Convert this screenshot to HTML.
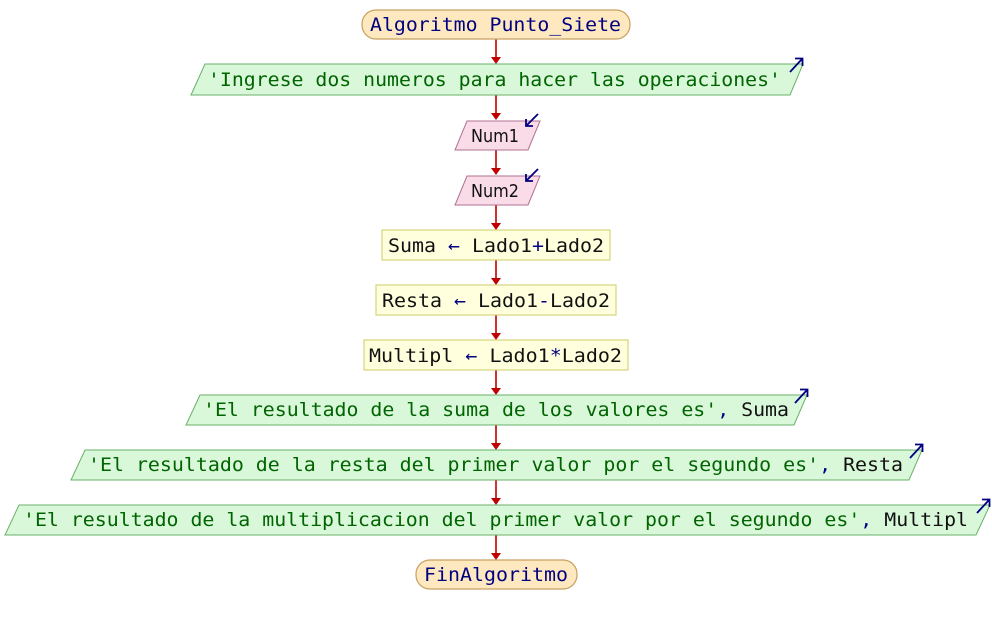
<!DOCTYPE html>
<html><head><meta charset="utf-8"><style>
html,body{margin:0;padding:0;background:#fff;width:992px;height:625px;overflow:hidden}
svg{display:block}
.m{font-family:"DejaVu Sans Mono","Liberation Mono",monospace;font-size:19px}
.s{font-family:"DejaVu Sans","Liberation Sans",sans-serif;font-size:18px}
.g{fill:#006400}.k{fill:#000080}.b{fill:#111}
.out{fill:#d9f7d9;stroke:#6ab06a;stroke-width:1}
.inp{fill:#fadbe8;stroke:#b07090;stroke-width:1}
.asg{fill:#ffffdd;stroke:#cccc66;stroke-width:1}
.term{fill:#fde8c0;stroke:#c8a060;stroke-width:1.2}
.ar{stroke:#c00000;stroke-width:1.6}
.ic{stroke:#000080;stroke-width:1.8;fill:none}
</style></head><body>
<svg width="992" height="625" viewBox="0 0 992 625">
<g class="ar">
<line x1="496" y1="39" x2="496" y2="60"/><line x1="496" y1="95" x2="496" y2="116"/>
<line x1="496" y1="150" x2="496" y2="171"/><line x1="496" y1="205" x2="496" y2="226"/>
<line x1="496" y1="260" x2="496" y2="281"/><line x1="496" y1="315" x2="496" y2="336"/>
<line x1="496" y1="370" x2="496" y2="391"/><line x1="496" y1="425" x2="496" y2="446"/>
<line x1="496" y1="480" x2="496" y2="501"/><line x1="496" y1="535" x2="496" y2="556"/>
</g>
<g fill="#c00000">
<path d="M491 57h10l-5 7z"/><path d="M491 113h10l-5 7z"/><path d="M491 168h10l-5 7z"/>
<path d="M491 223h10l-5 7z"/><path d="M491 278h10l-5 7z"/><path d="M491 333h10l-5 7z"/>
<path d="M491 388h10l-5 7z"/><path d="M491 443h10l-5 7z"/><path d="M491 498h10l-5 7z"/>
<path d="M491 553h10l-5 7z"/>
</g>
<rect class="term" x="362" y="10" width="268" height="29" rx="14"/>
<text class="m k" x="370" y="31" textLength="251" lengthAdjust="spacingAndGlyphs">Algoritmo Punto_Siete</text>
<path class="out" d="M205 64H803L790 95H191Z"/>
<text class="m g" x="208" y="86" textLength="573" lengthAdjust="spacingAndGlyphs">'Ingrese dos numeros para hacer las operaciones'</text>
<path class="ic" d="M790 72L802 59M795 58.5H802.5V66"/>
<path class="inp" d="M467 121H540L528 150H455Z"/>
<text class="s b" x="471" y="142" textLength="48" lengthAdjust="spacingAndGlyphs">Num1</text>
<path class="ic" d="M538 114L526 126M526 119V126H533"/>
<path class="inp" d="M467 176H540L528 205H455Z"/>
<text class="s b" x="471" y="197" textLength="48" lengthAdjust="spacingAndGlyphs">Num2</text>
<path class="ic" d="M538 169L526 181M526 174V181H533"/>
<rect class="asg" x="382" y="230" width="228" height="30"/>
<text class="m" x="388" y="252" textLength="216" lengthAdjust="spacingAndGlyphs"><tspan class="b">Suma </tspan><tspan class="k">←</tspan><tspan class="b"> Lado1</tspan><tspan class="k">+</tspan><tspan class="b">Lado2</tspan></text>
<rect class="asg" x="376" y="285" width="240" height="30"/>
<text class="m" x="382" y="307" textLength="228" lengthAdjust="spacingAndGlyphs"><tspan class="b">Resta </tspan><tspan class="k">←</tspan><tspan class="b"> Lado1</tspan><tspan class="k">-</tspan><tspan class="b">Lado2</tspan></text>
<rect class="asg" x="364" y="340" width="264" height="30"/>
<text class="m" x="369" y="362" textLength="253" lengthAdjust="spacingAndGlyphs"><tspan class="b">Multipl </tspan><tspan class="k">←</tspan><tspan class="b"> Lado1</tspan><tspan class="k">*</tspan><tspan class="b">Lado2</tspan></text>
<path class="out" d="M200 395H807L794 425H186Z"/>
<text class="m" x="203" y="416" textLength="586" lengthAdjust="spacingAndGlyphs"><tspan class="g">'El resultado de la suma de los valores es'</tspan><tspan class="k">,</tspan><tspan class="b"> Suma</tspan></text>
<path class="ic" d="M795 403L807 390M800 389.5H807.5V397"/>
<path class="out" d="M85 450H922L909 480H71Z"/>
<text class="m" x="88" y="471" textLength="815" lengthAdjust="spacingAndGlyphs"><tspan class="g">'El resultado de la resta del primer valor por el segundo es'</tspan><tspan class="k">,</tspan><tspan class="b"> Resta</tspan></text>
<path class="ic" d="M910 458L922 445M915 444.5H922.5V452"/>
<path class="out" d="M19 505H990L976 535H5Z"/>
<text class="m" x="23" y="526" textLength="945" lengthAdjust="spacingAndGlyphs"><tspan class="g">'El resultado de la multiplicacion del primer valor por el segundo es'</tspan><tspan class="k">,</tspan><tspan class="b"> Multipl</tspan></text>
<path class="ic" d="M977 513L989 500M982 499.5H989.5V507"/>
<rect class="term" x="416" y="560" width="161" height="29" rx="14"/>
<text class="m k" x="424" y="581" textLength="144" lengthAdjust="spacingAndGlyphs">FinAlgoritmo</text>
</svg>
</body></html>
